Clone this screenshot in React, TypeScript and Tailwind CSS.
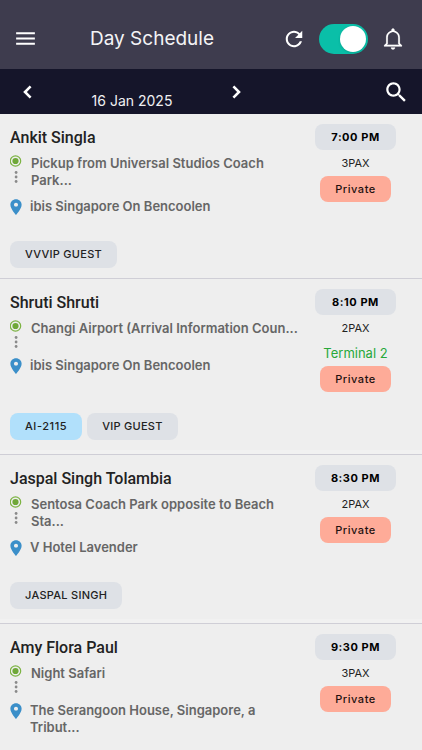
import { useState } from "react";
import {
  IoMdMenu,
  IoMdRefresh,
  IoMdNotificationsOutline,
  IoMdSearch,
  IoMdPin,
} from "react-icons/io";

type Tag = { label: string; tone: "grey" | "blue" };

type Trip = {
  guest: string;
  from: string;
  to: string;
  time: string;
  pax: string;
  terminal?: string;
  kind: string;
  tags: Tag[];
  spacer?: boolean;
};

const trips: Trip[] = [
  {
    guest: "Ankit Singla",
    from: "Pickup from Universal Studios Coach Park...",
    to: "ibis Singapore On Bencoolen",
    time: "7:00 PM",
    pax: "3PAX",
    kind: "Private",
    tags: [{ label: "VVVIP GUEST", tone: "grey" }],
  },
  {
    guest: "Shruti Shruti",
    from: "Changi Airport (Arrival Information Coun...",
    to: "ibis Singapore On Bencoolen",
    time: "8:10 PM",
    pax: "2PAX",
    terminal: "Terminal 2",
    kind: "Private",
    tags: [
      { label: "AI-2115", tone: "blue" },
      { label: "VIP GUEST", tone: "grey" },
    ],
    spacer: true,
  },
  {
    guest: "Jaspal Singh Tolambia",
    from: "Sentosa Coach Park opposite to Beach Sta...",
    to: "V Hotel Lavender",
    time: "8:30 PM",
    pax: "2PAX",
    kind: "Private",
    tags: [{ label: "JASPAL SINGH", tone: "grey" }],
    spacer: true,
  },
  {
    guest: "Amy Flora Paul",
    from: "Night Safari",
    to: "The Serangoon House, Singapore, a Tribut...",
    time: "9:30 PM",
    pax: "3PAX",
    kind: "Private",
    tags: [],
  },
];

function Chevron({ d }: { d: string }) {
  return (
    <svg width="26" height="26" viewBox="0 0 26 26" fill="none" stroke="currentColor" strokeWidth="2.6" aria-hidden="true">
      <path d={d} />
    </svg>
  );
}

function RouteMarker() {
  return (
    <svg width="12" height="28" viewBox="0.5 0 12 28" className="block shrink-0" aria-hidden="true">
      <circle cx="6" cy="6" r="5.2" fill="none" stroke="#7cb342" strokeWidth="1.2" />
      <circle cx="6" cy="6" r="3.1" fill="#6fa838" />
      <circle cx="6.6" cy="17.5" r="1.4" fill="#8a8a8a" />
      <circle cx="6.6" cy="22" r="1.4" fill="#8a8a8a" />
      <circle cx="6.6" cy="26.5" r="1.4" fill="#8a8a8a" />
    </svg>
  );
}

function TripCard({ trip }: { trip: Trip }) {
  return (
    <li className="border-b border-[#cfced6] last:border-b-0">
      <div className="px-[10px] pt-[10px] pb-[10px]">
        <div className="flex gap-2">
          <div className="min-w-0 flex-1 pb-[5px]">
            <h2 className="mt-[2px] font-[Roboto,sans-serif] text-base leading-6 font-medium text-[#222222]">
              {trip.guest}
            </h2>
            <div className="mt-[5px] flex gap-[9px]">
              <RouteMarker />
              <p className="min-w-0 text-[13px] leading-[17px] font-semibold text-[#666666]">{trip.from}</p>
            </div>
            <div className="mt-[9px] flex gap-[8px]">
              <span className="flex h-[17px] w-3 shrink-0 items-center justify-center text-[#3b8fc9]">
                <IoMdPin size={18} className="shrink-0" />
              </span>
              <p className="min-w-0 text-[13px] leading-[17px] font-semibold text-[#666666]">{trip.to}</p>
            </div>
          </div>
          <div className="mr-4 flex w-[81px] shrink-0 flex-col items-center">
            <span className="w-full rounded-lg bg-[#dee1e6] text-center text-[11px] leading-[26px] font-bold tracking-wider text-black">
              {trip.time}
            </span>
            <span className="my-[5px] text-[11px] leading-4 text-[#222222]">{trip.pax}</span>
            {trip.terminal && (
              <span className="mt-[3px] mb-[4px] text-[13px] leading-[18px] whitespace-nowrap text-[#27a83a]">
                {trip.terminal}
              </span>
            )}
            <span className="rounded-lg bg-[#feab98] px-[15px] text-[11px] leading-[26px] font-medium tracking-wider text-[#1f1210]">
              {trip.kind}
            </span>
          </div>
        </div>
        {trip.tags.length > 0 && (
          <div className="mt-[21px] flex gap-[5px]">
            {trip.tags.map((tag) => (
              <span
                key={tag.label}
                className={
                  tag.tone === "blue"
                    ? "rounded-lg bg-[#b1e0fb] px-[15px] text-[11px] leading-[27px] font-medium tracking-wider text-[#222222]"
                    : "rounded-lg bg-[#dee1e6] px-[15px] text-[11px] leading-[27px] font-medium tracking-wide text-[#222222]"
                }
              >
                {tag.label}
              </span>
            ))}
          </div>
        )}
      </div>
      {trip.spacer && <div className="h-1 bg-[#f1f1f1]" />}
    </li>
  );
}

export default function App() {
  const [online, setOnline] = useState(true);

  return (
    <div className="min-h-screen bg-[#eeeeee] font-[Inter,sans-serif]">
      <header className="flex h-[69px] items-center bg-[#3e3c4e] pt-2 pr-4 pl-[13px] text-white">
        <button type="button" aria-label="Menu">
          <IoMdMenu size={25} />
        </button>
        <h1 className="ml-[52px] flex-1 text-[19px] leading-6 font-normal whitespace-nowrap text-[#f4f4f6]">
          Day Schedule
        </h1>
        <button type="button" aria-label="Refresh">
          <IoMdRefresh size={24} />
        </button>
        <label className="ml-[13px] flex cursor-pointer">
          <input
            type="checkbox"
            role="switch"
            aria-label="Online"
            checked={online}
            onChange={(e) => setOnline(e.target.checked)}
            className="peer sr-only"
          />
          <span className="flex h-[30px] w-[49px] items-center rounded-full bg-[#8a8a96] px-[2px] peer-checked:justify-end peer-checked:bg-[#0abfa8]">
            <span className="size-[26px] rounded-full bg-white shadow" />
          </span>
        </label>
        <button type="button" aria-label="Notifications" className="ml-3">
          <IoMdNotificationsOutline size={26} stroke="currentColor" strokeWidth={3} />
        </button>
      </header>

      <nav className="flex h-[45px] items-center bg-[#15152a] pr-[13px] pl-[14px] text-white">
        <button type="button" aria-label="Previous day">
          <Chevron d="M16.6 7.4 11 13l5.6 5.6" />
        </button>
        <span className="mt-[18px] w-[184px] text-center text-[14px] leading-5 text-[#f0f0f2]">16 Jan 2025</span>
        <button type="button" aria-label="Next day">
          <Chevron d="M9.4 7.4 15 13l-5.6 5.6" />
        </button>
        <button type="button" aria-label="Search" className="ml-auto">
          <IoMdSearch size={26} />
        </button>
      </nav>

      <ul>
        {trips.map((trip) => (
          <TripCard key={trip.guest} trip={trip} />
        ))}
      </ul>
    </div>
  );
}
